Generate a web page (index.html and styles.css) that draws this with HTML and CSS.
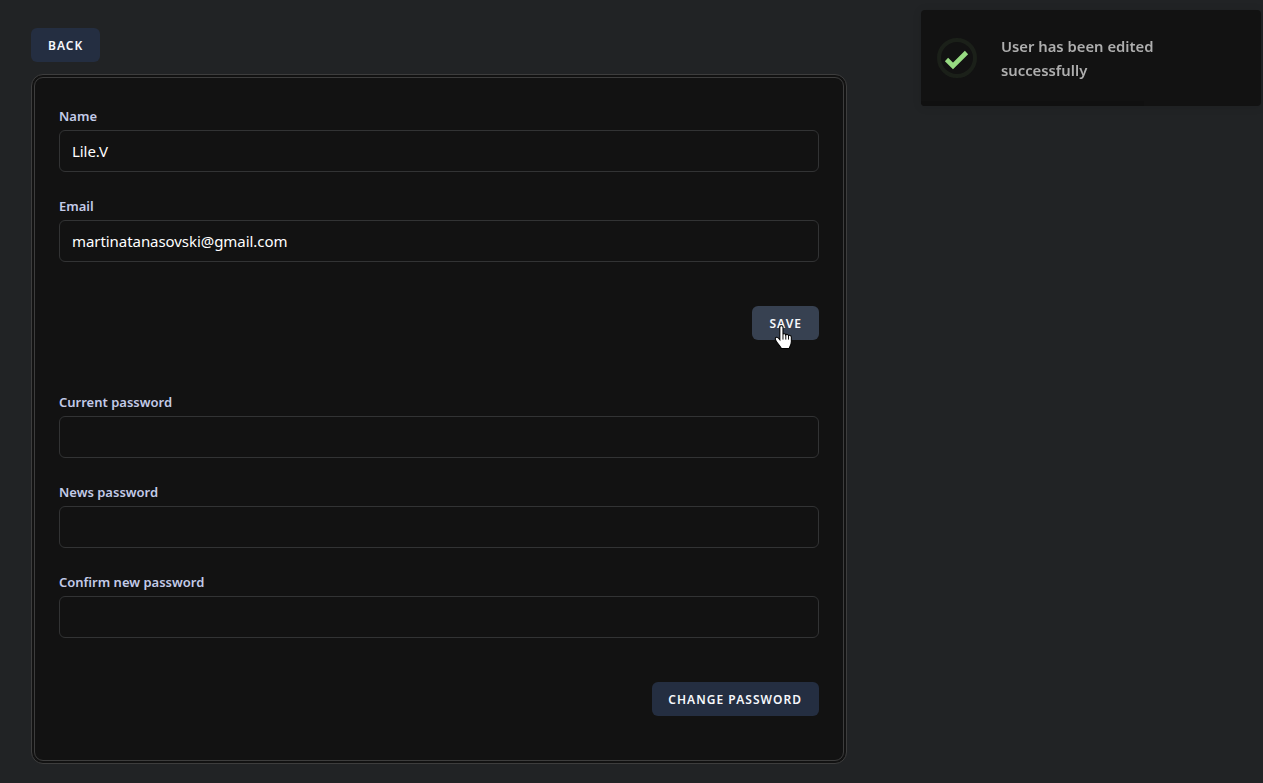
FILE: index.html
```html
<!DOCTYPE html>
<html lang="en">
<head>
<meta charset="utf-8">
<title>Edit user</title>
<link rel="stylesheet" href="styles.css">
</head>
<body>
<main class="page">
  <button class="btn btn-back" type="button">BACK</button>
  <section class="card">
    <form class="group">
      <div class="field">
        <label class="label">Name</label>
        <input class="input" type="text" value="Lile.V">
      </div>
      <div class="field">
        <label class="label">Email</label>
        <input class="input" type="text" value="martinatanasovski@gmail.com">
      </div>
      <div class="actions">
        <button class="btn btn-hover" type="button">SAVE</button>
      </div>
    </form>
    <form class="group group-password">
      <div class="field">
        <label class="label">Current password</label>
        <input class="input" type="password">
      </div>
      <div class="field">
        <label class="label">News password</label>
        <input class="input" type="password">
      </div>
      <div class="field">
        <label class="label">Confirm new password</label>
        <input class="input" type="password">
      </div>
      <div class="actions">
        <button class="btn" type="button">CHANGE PASSWORD</button>
      </div>
    </form>
  </section>
</main>

<div class="toast">
  <svg class="toast-icon" width="40" height="40" viewBox="0 0 40 40">
    <circle cx="20" cy="20" r="18" fill="none" stroke="#1b2019" stroke-width="4"/>
    <path d="M9.500 21.500 L16 28 L29.500 14.500" fill="none" stroke="#97db82" stroke-width="4.600"/>
  </svg>
  <div class="toast-text">User has been edited successfully</div>
  <div class="toast-bar"></div>
</div>

<svg class="cursor" width="19" height="24" viewBox="0 0 18 23">
  <path d="M5.500 2C5.500.3 8.500.3 8.500 2V9C9 8 11 8 11.200 9.500C11.800 8.600 13.600 8.800 13.800 10.300C14.500 9.500 16.500 9.900 16.500 11.500V16C16.500 19 15 20.500 14.500 22.500H7C6 20.500 4 18.500 2 15.500C.6 13.500 1 12 2.200 11.800C3.400 11.600 4.600 12.800 5.500 14Z" fill="#fff" stroke="#000"/>
  <path d="M8.500 9V14M11.200 9.500V14M13.800 10.300V14" stroke="#000" stroke-width=".9" fill="none"/>
</svg>
</body>
</html>
```
FILE: styles.css
```css
* { box-sizing: border-box; }
html, body { margin: 0; height: 100%; }
body {
  background: #212325;
  font-family: "Noto Sans", "Open Sans", sans-serif;
  overflow: hidden;
}
.page {
  display: flex;
  flex-direction: column;
  align-items: flex-start;
  padding: 28px 0 0 31px;
}
.btn {
  height: 34px;
  padding: 1px 17px 0 16px;
  border: 0;
  border-radius: 6px;
  background: #242e41;
  color: #f6f8fc;
  font-family: inherit;
  font-size: 12px;
  font-weight: 600;
  letter-spacing: 1.04px;
  line-height: 33px;
}
.btn-back { padding: 1px 17px 0 17px; }
.btn-hover { padding-left: 17px; background: #374151; }
.card {
  width: 816px;
  height: 690px;
  margin-top: 12px;
  padding: 29px 24px 0 24px;
  border: 4px double #3d3d3d;
  border-radius: 12px;
  background: #121212;
}
.group { display: flex; flex-direction: column; }
.group-password { margin-top: 53px; }
.field {
  display: flex;
  flex-direction: column;
  gap: 5px;
  margin-bottom: 25px;
}
.label {
  color: #c3cbe8;
  font-size: 13px;
  font-weight: 600;
  line-height: 18px;
}
.input {
  width: 760px;
  height: 42px;
  padding: 0 12px;
  border: 1px solid #323334;
  border-radius: 6px;
  background: #121212;
  color: #fff;
  font-family: inherit;
  font-size: 15px;
  letter-spacing: -.06px;
  outline: none;
}
.actions {
  display: flex;
  justify-content: flex-end;
  margin-top: 19px;
}
.toast {
  position: fixed;
  top: 10px;
  right: 2px;
  width: 340px;
  height: 96px;
  display: flex;
  align-items: center;
  padding: 0 16px;
  border-radius: 4px;
  background: #121212;
  box-shadow: 0 1px 10px rgba(0, 0, 0, .1);
  overflow: hidden;
}
.toast-icon { flex: none; }
.toast-text {
  margin-left: 24px;
  width: 180px;
  color: #aeaeae;
  font-size: 14.800px;
  font-weight: 600;
  line-height: 24px;
}
.toast-bar {
  position: absolute;
  left: 0;
  bottom: 0;
  width: 223px;
  height: 5px;
  background: #101010;
}
.cursor {
  position: fixed;
  left: 774px;
  top: 325px;
}
```
